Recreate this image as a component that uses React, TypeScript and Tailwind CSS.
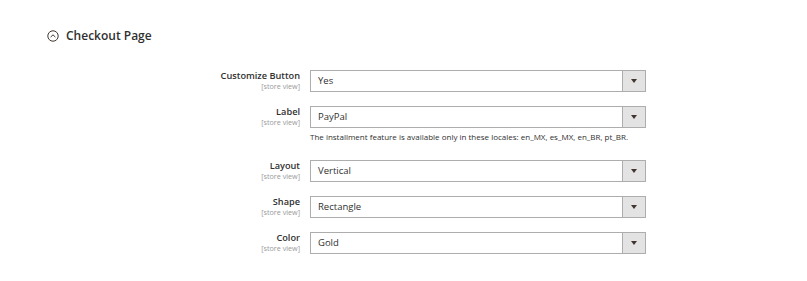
import React from "react";

type Field = { label: string; value: string; note?: string };

const fields: Field[] = [
  { label: "Customize Button", value: "Yes" },
  {
    label: "Label",
    value: "PayPal",
    note: "The installment feature is available only in these locales: en_MX, es_MX, en_BR, pt_BR.",
  },
  { label: "Layout", value: "Vertical" },
  { label: "Shape", value: "Rectangle" },
  { label: "Color", value: "Gold" },
];

function SelectBox({ value }: { value: string }) {
  return (
    <div className="flex h-[22px] w-[336px] border border-[#adadad] bg-white">
      <div className="flex flex-1 items-center pl-[7px] text-[9.5px] text-[#303030]">{value}</div>
      <div className="flex w-[23px] items-center justify-center border-l border-[#adadad] bg-[#e3e3e3]">
        <svg width="6" height="4" viewBox="0 0 6 4">
          <path d="M0 0h6L3 4z" fill="#41362f" />
        </svg>
      </div>
    </div>
  );
}

export default function App() {
  return (
    <div
      className="h-[281px] w-[807px] bg-white"
      style={{ fontFamily: '"Open Sans", sans-serif' }}
    >
      <div className="flex items-center gap-[7px] pl-[47px] pt-[29px]">
        <svg width="12" height="12" viewBox="0 0 12 12">
          <circle cx="6" cy="6" r="5.2" fill="none" stroke="#41362f" strokeWidth="1" />
          <path d="M3.6 7.1L6 4.8l2.4 2.3" fill="none" stroke="#41362f" strokeWidth="1" />
        </svg>
        <span className="text-[12px] font-semibold leading-[14px] text-[#303030]">Checkout Page</span>
      </div>

      <div className="mt-[27px] flex flex-col gap-[14px]">
        {fields.map((f) => (
          <div key={f.label} className="flex items-start">
            <div className="w-[300px] text-right">
              <div className="text-[9.2px] font-semibold leading-[12px] text-[#303030]">{f.label}</div>
              <div className="text-[7.2px] leading-[9px] text-[#999999]">[store view]</div>
            </div>
            <div className="ml-[10px] flex flex-col">
              <SelectBox value={f.value} />
              {f.note && (
                <div className="pb-[4px] pt-[4px] text-[8px] leading-[10px] text-[#303030]">{f.note}</div>
              )}
            </div>
          </div>
        ))}
      </div>
    </div>
  );
}
